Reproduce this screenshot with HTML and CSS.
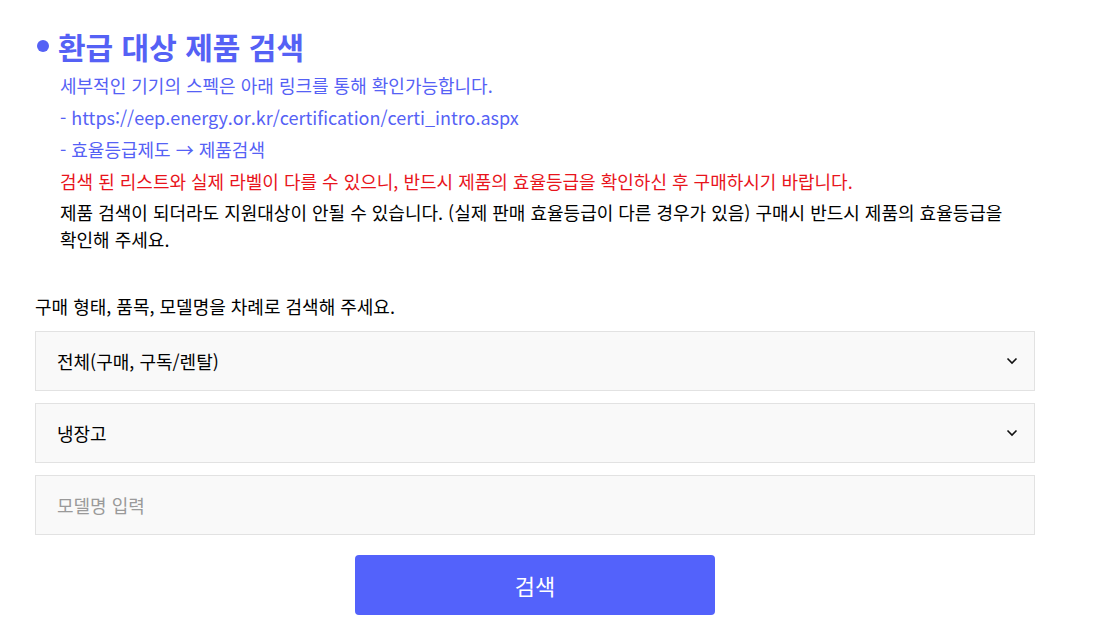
FILE: index.html
```html
<!DOCTYPE html>
<html lang="ko">
<head>
  <meta charset="utf-8">
  <title>환급 대상 제품 검색</title>
  <link rel="stylesheet" href="styles.css">
</head>
<body>
  <div class="search-page">
    <h2 class="title"><span class="dot"></span>환급 대상 제품 검색</h2>

    <div class="notice">
      <p class="blue">세부적인 기기의 스펙은 아래 링크를 통해 확인가능합니다.</p>
      <p class="blue">- https://eep.energy.or.kr/certification/certi_intro.aspx</p>
      <p class="blue">- 효율등급제도 → 제품검색</p>
      <p class="red">검색 된 리스트와 실제 라벨이 다를 수 있으니, 반드시 제품의 효율등급을 확인하신 후 구매하시기 바랍니다.</p>
      <p class="black">제품 검색이 되더라도 지원대상이 안될 수 있습니다. (실제 판매 효율등급이 다른 경우가 있음) 구매시 반드시 제품의 효율등급을 확인해 주세요.</p>
    </div>

    <p class="guide">구매 형태, 품목, 모델명을 차례로 검색해 주세요.</p>

    <div class="fields">
      <div class="field select-box">
        <span>전체(구매, 구독/렌탈)</span>
        <svg width="12" height="8" viewBox="0 0 12 8"><path d="M1.5 1.5 L6 6 L10.5 1.5" fill="none" stroke="#111" stroke-width="1.6"/></svg>
      </div>
      <div class="field select-box">
        <span>냉장고</span>
        <svg width="12" height="8" viewBox="0 0 12 8"><path d="M1.5 1.5 L6 6 L10.5 1.5" fill="none" stroke="#111" stroke-width="1.6"/></svg>
      </div>
      <input class="field model-input" type="text" placeholder="모델명 입력">
    </div>

    <div class="actions">
      <button class="search-btn" type="button">검색</button>
    </div>
  </div>
</body>
</html>
```

FILE: styles.css
```css
body {
  margin: 0;
  background-color: #fff;
  font-family: "Noto Sans CJK KR", "Noto Sans", sans-serif;
  color: #000;
  word-break: keep-all;
}

.search-page {
  width: 1000px;
  padding: 26px 0 0 35px;
}

.title {
  display: flex;
  align-items: center;
  margin: 0;
  font-size: 30px;
  font-weight: 700;
  line-height: 40px;
  color: #5561f5;
}

.title .dot {
  width: 12px;
  height: 12px;
  border-radius: 50%;
  background-color: #5561f5;
  margin: 0 9px 0 2px;
}

.notice {
  padding: 0 0 0 25px;
  margin-top: 3px;
}

.notice p {
  margin: 0;
  font-size: 18px;
  line-height: 32px;
}

.notice .blue {
  color: #5561f5;
}

.notice .red {
  color: #e8141c;
}

.notice .black {
  color: #000;
  line-height: 27px;
  margin-top: 2px;
}

.guide {
  margin: 39px 0 0;
  font-size: 18px;
  line-height: 28px;
}

.fields {
  display: flex;
  flex-direction: column;
  gap: 12px;
  margin-top: 11px;
}

.field {
  box-sizing: border-box;
  height: 60px;
  width: 1000px;
  border: 1px solid #e2e2e2;
  background-color: #f9f9f9;
  padding: 0 16px 0 21px;
  font-family: inherit;
  font-size: 18px;
  color: #000;
}

.select-box {
  display: flex;
  align-items: center;
  justify-content: space-between;
}

.model-input {
  outline: none;
}

.model-input::placeholder {
  color: #9a9a9a;
}

.actions {
  display: flex;
  justify-content: center;
  margin-top: 20px;
}

.search-btn {
  width: 360px;
  height: 60px;
  border: none;
  border-radius: 4px;
  background-color: #5362fb;
  color: #fff;
  font-family: inherit;
  font-size: 22px;
  cursor: pointer;
}
```
